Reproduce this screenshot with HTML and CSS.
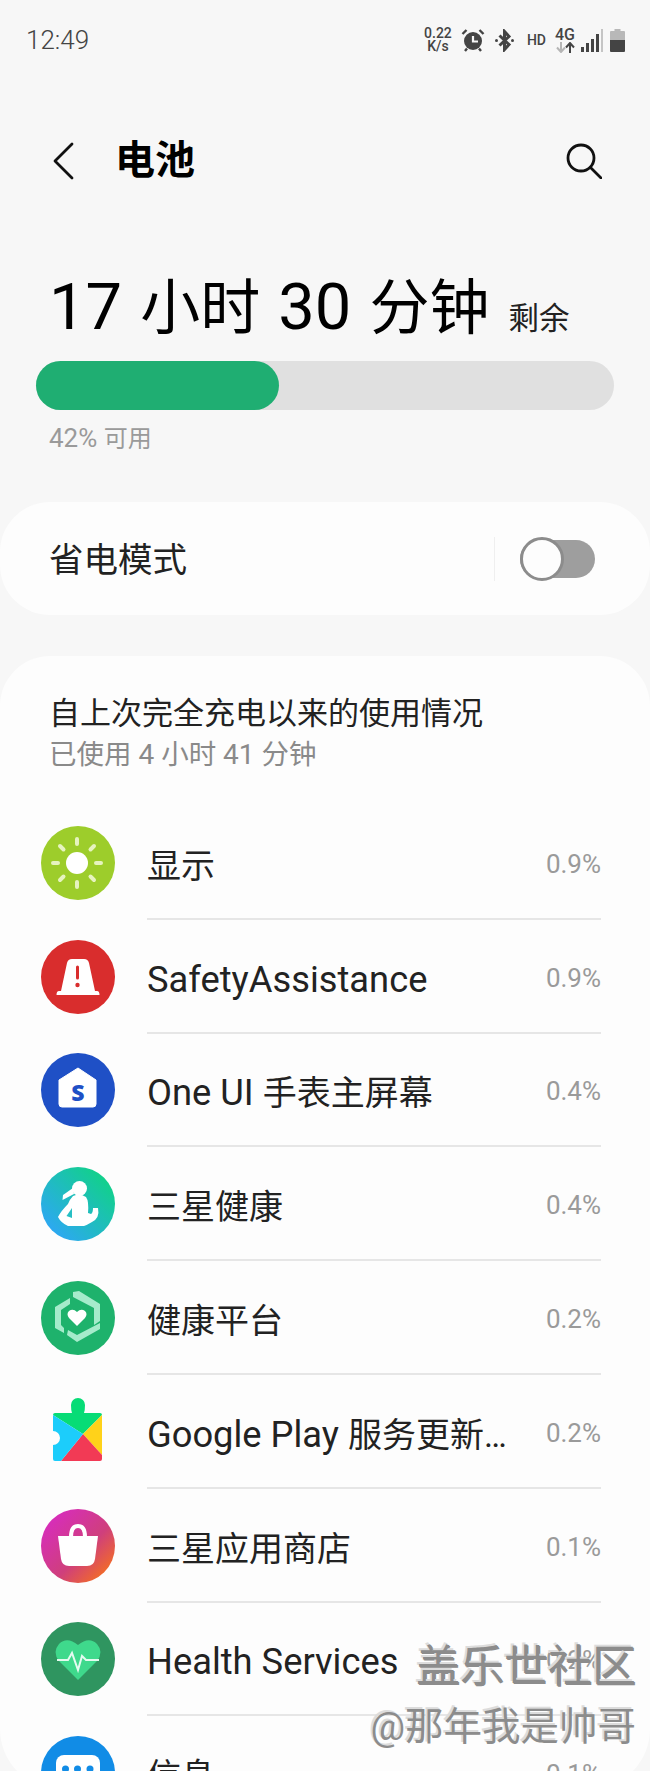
FILE: index.html
```html
<!DOCTYPE html>
<html lang="zh-CN">
<head>
  <meta charset="UTF-8">
  <meta name="viewport" content="width=device-width, initial-scale=1.0">
  <title>电池</title>
  <link rel="stylesheet" href="styles.css">
</head>
<body>
  <div class="status">
    <span class="time">12:49</span>
    <div class="status-icons">
      <div class="speed"><span>0.22</span><span>K/s</span></div>
      <svg class="ic-alarm" width="24" height="24" viewBox="0 0 24 24">
        <circle cx="12" cy="13" r="9" fill="#444"/>
        <path d="M12 8V13.500H17" stroke="#f7f7f7" stroke-width="2.200" fill="none"/>
        <path d="M1.500 6 5.500 2M22.500 6 18.500 2M6 20.500 4 23M18 20.500 20 23" stroke="#444" stroke-width="2.400" fill="none"/>
      </svg>
      <svg class="ic-bt" width="19" height="23" viewBox="0 0 19 23">
        <path d="M4.500 6.500 14 15.500 9.500 20.500V2.500L14 7.500 4.500 16.500" stroke="#444" stroke-width="3" fill="none"/>
        <circle cx="1.500" cy="11.500" r="1.500" fill="#444"/>
        <circle cx="17.500" cy="11.500" r="1.500" fill="#444"/>
      </svg>
      <span class="hd">HD</span>
      <div class="net">
        <span>4G</span>
        <svg width="19" height="11" viewBox="0 0 19 11">
          <path d="M5 0V9M1 5.500 5 10 9 5.500" stroke="#b5b5b5" stroke-width="2" fill="none"/>
          <path d="M14 11V2M10 5.500 14 1 18 5.500" stroke="#444" stroke-width="2" fill="none"/>
        </svg>
      </div>
      <svg class="ic-signal" width="23" height="23" viewBox="0 0 23 23">
        <rect x="0" y="18" width="3" height="5" fill="#444"/>
        <rect x="5" y="14" width="3" height="9" fill="#444"/>
        <rect x="10" y="10" width="3" height="13" fill="#444"/>
        <rect x="15" y="5" width="3" height="18" fill="#444"/>
        <rect x="20" y="0" width="2" height="23" fill="#c4c4c4"/>
      </svg>
      <svg class="ic-batt" width="15" height="23" viewBox="0 0 15 23">
        <path d="M4.500 0H10.500V2H14a1 1 0 0 1 1 1V11H0V3a1 1 0 0 1 1-1H4.500Z" fill="#b8b8b8"/>
        <path d="M0 11H15V22a1 1 0 0 1-1 1H1a1 1 0 0 1-1-1Z" fill="#444"/>
      </svg>
    </div>
  </div>

  <header class="topbar">
    <svg class="back" width="22" height="38" viewBox="0 0 22 38">
      <path d="M20 2 3 19 20 36" stroke="#111" stroke-width="2.800" fill="none" stroke-linecap="round" stroke-linejoin="round"/>
    </svg>
    <h1>电池</h1>
    <svg class="search" width="36" height="36" viewBox="0 0 36 36">
      <circle cx="15" cy="15" r="13" stroke="#111" stroke-width="2.800" fill="none"/>
      <path d="M24.500 24.500 35 35" stroke="#111" stroke-width="2.800" stroke-linecap="round"/>
    </svg>
  </header>

  <section class="summary">
    <div class="remain"><span class="big">17 <span class="zh">小时</span> 30 <span class="zh">分钟</span></span><span class="left">剩余</span></div>
    <div class="track"><div class="fill" style="width: 243px"></div></div>
    <div class="avail">42% <span class="zh">可用</span></div>
  </section>

  <section class="card saver">
    <span class="saver-label">省电模式</span>
    <div class="saver-end">
      <div class="switch"><div class="thumb"></div></div>
    </div>
  </section>

  <section class="card usage">
    <div class="usage-head">
      <div class="usage-title">自上次完全充电以来的使用情况</div>
      <div class="usage-sub"><span class="zh">已使用</span> 4 <span class="zh">小时</span> 41 <span class="zh">分钟</span></div>
    </div>

    <div class="row">
      <svg class="app" viewBox="0 0 74 74">
        <circle cx="37" cy="37" r="37" fill="#9dcd2b"/>
        <circle cx="36" cy="37" r="11" fill="#fff"/>
        <path d="M36 13V18M36 56V61M12 37H17M55 37H60M19 20 22.500 23.500M53 20 49.500 23.500M19 54 22.500 50.500M53 54 49.500 50.500" stroke="#e6f3bf" stroke-width="4" stroke-linecap="round"/>
      </svg>
      <div class="row-body"><span class="name"><span class="zh">显示</span></span><span class="pct">0.9%</span></div>
    </div>

    <div class="row">
      <svg class="app" viewBox="0 0 74 74">
        <circle cx="37" cy="37" r="37" fill="#d92d2d"/>
        <path d="M20 51 26 23Q27 19 31 19H43Q47 19 48 23L54 51H56Q58.500 51 58.500 55H15.500Q15.500 51 18 51Z" fill="#fff"/>
        <path d="M36.500 27V38" stroke="#d92d2d" stroke-width="3" stroke-linecap="round"/>
        <circle cx="36.500" cy="45" r="2.200" fill="#d92d2d"/>
      </svg>
      <div class="row-body"><span class="name">SafetyAssistance</span><span class="pct">0.9%</span></div>
    </div>

    <div class="row">
      <svg class="app" viewBox="0 0 74 74">
        <circle cx="37" cy="37" r="37" fill="#1f50c6"/>
        <path d="M37 15 55 27V51Q55 54 52 54H21Q18 54 18 51V27Z" fill="#fff" stroke="#fff" stroke-width="1" stroke-linejoin="round"/>
        <text x="37" y="48" class="app-s">S</text>
      </svg>
      <div class="row-body"><span class="name">One UI <span class="zh">手表主屏幕</span></span><span class="pct">0.4%</span></div>
    </div>

    <div class="row">
      <svg class="app" viewBox="0 0 74 74">
        <defs>
          <linearGradient id="shealth" x1="1" y1="0" x2="0" y2="1">
            <stop offset="0.15" stop-color="#12d08c"/>
            <stop offset="0.9" stop-color="#2ea6f7"/>
          </linearGradient>
        </defs>
        <circle cx="37" cy="37" r="37" fill="url(#shealth)"/>
        <circle cx="38.500" cy="21.500" r="7.500" fill="#fff"/>
        <path d="M32 21 22 28 21.500 33 33 27Z" fill="#fff"/>
        <path d="M32 29Q39 26 45 30 48 34 47 46L50 47Q52 46 52 41L57 41Q59 51 51 55 46 58 43 59H27Q20 56 17 50 20 44 27 37 29 32 32 29Z" fill="#fff"/>
        <path d="M31 41 25.500 49 31 51Z" fill="#26bfc4"/>
      </svg>
      <div class="row-body"><span class="name"><span class="zh">三星健康</span></span><span class="pct">0.4%</span></div>
    </div>

    <div class="row">
      <svg class="app" viewBox="0 0 74 74">
        <circle cx="37" cy="37" r="37" fill="#1eb26c"/>
        <path d="M32 11 38 10 59 23V40L53 44V27L32 16Z" fill="#a5ebcb"/>
        <path d="M29 17 14 26V47L23 52V47L20 44V29L29 23Z" fill="#a5ebcb"/>
        <path d="M26 54 36 61 59 48V42L36 54 27 49Z" fill="#a5ebcb"/>
        <path d="M36 45 28 37Q25 33 28 30 32 27 36 31 40 27 44 30 47 33 44 37Z" fill="#fff"/>
      </svg>
      <div class="row-body"><span class="name"><span class="zh">健康平台</span></span><span class="pct">0.2%</span></div>
    </div>

    <div class="row">
      <svg class="app" viewBox="0 0 74 74">
        <path d="M12 20Q12 18 14 18H31Q30 15 30 10A7 7 0 1 1 44 10Q44 15 43 18H59Q61 18 61 20L42 39Z" fill="#07dc76"/>
        <path d="M61 20V60L42 39Z" fill="#ffd21a"/>
        <path d="M20 66 42 39 61 60V64Q61 66 59 66Z" fill="#f23a55"/>
        <path d="M12 20 42 39 20 66H14Q12 66 12 64V50A7 7 0 0 0 12 36Z" fill="#1ccdfb"/>
      </svg>
      <div class="row-body"><span class="name">Google Play <span class="zh">服务更新…</span></span><span class="pct">0.2%</span></div>
    </div>

    <div class="row">
      <svg class="app" viewBox="0 0 74 74">
        <defs>
          <linearGradient id="store" x1="0.1" y1="0.15" x2="0.85" y2="0.9">
            <stop offset="0" stop-color="#d72dbb"/>
            <stop offset="0.6" stop-color="#cf3f7c"/>
            <stop offset="1" stop-color="#f26b28"/>
          </linearGradient>
        </defs>
        <circle cx="37" cy="37" r="37" fill="url(#store)"/>
        <path d="M17 27H57L54 50Q53 57 46 57H28Q21 57 20 50Z" fill="#fff"/>
        <path d="M30 28Q30 17 37 17 44 17 44 28" stroke="#fff" stroke-width="4" fill="none"/>
      </svg>
      <div class="row-body"><span class="name"><span class="zh">三星应用商店</span></span><span class="pct">0.1%</span></div>
    </div>

    <div class="row">
      <svg class="app" viewBox="0 0 74 74">
        <circle cx="37" cy="37" r="37" fill="#2f9560"/>
        <path d="M37 58 18 39Q11 30 18 22 26 14 37 23 48 14 56 22 63 30 56 39Z" fill="#3fd98c"/>
        <path d="M16 38H27L31 31 37 48 41 34 45 38H58" stroke="#e5fbf0" stroke-width="2" fill="none"/>
      </svg>
      <div class="row-body"><span class="name">Health Services</span><span class="pct">0.2%</span></div>
    </div>

    <div class="row">
      <svg class="app" viewBox="0 0 74 74">
        <circle cx="37" cy="37" r="37" fill="#118ce6"/>
        <rect x="15" y="19" width="44" height="36" rx="8" fill="#fff"/>
        <circle cx="24.500" cy="33" r="3.500" fill="#118ce6"/>
        <circle cx="36.500" cy="33" r="3.500" fill="#118ce6"/>
        <circle cx="49" cy="33" r="3.500" fill="#118ce6"/>
      </svg>
      <div class="row-body"><span class="name"><span class="zh">信息</span></span><span class="pct">0.1%</span></div>
    </div>
  </section>

  <div class="mark">
    <div class="mark-a">盖乐世社区</div>
    <div class="mark-b">@那年我是帅哥</div>
  </div>
</body>
</html>
```

FILE: styles.css
```css
* {
  margin: 0;
  padding: 0;
  box-sizing: border-box;
}
html, body {
  height: 1771px;
  overflow: hidden;
}
body {
  position: relative;
  background-color: #f7f7f7;
  color: #111;
  font-family: Roboto, "Noto Sans CJK SC", sans-serif;
}
.status {
  display: flex;
  justify-content: space-between;
  align-items: center;
  height: 80px;
  padding: 0 25px 0 26px;
  color: #444;
}
.time {
  font-size: 26px;
  font-weight: 300;
}
.status-icons {
  display: flex;
  align-items: center;
}
.speed {
  display: flex;
  flex-direction: column;
  align-items: center;
  width: 30px;
  font-size: 14px;
  font-weight: 500;
  line-height: 13px;
}
.ic-alarm {
  margin-left: 8px;
}
.ic-bt {
  margin-left: 10px;
}
.hd {
  margin-left: 13px;
  font-size: 14px;
  font-weight: 500;
}
.net {
  display: flex;
  flex-direction: column;
  align-items: center;
  margin-left: 9px;
  font-size: 16px;
  font-weight: 500;
  line-height: 14px;
}
.net svg {
  display: block;
}
.ic-signal {
  margin-left: 6px;
}
.ic-batt {
  margin-left: 6px;
}
.topbar {
  display: flex;
  align-items: center;
  height: 72px;
  margin-top: 45px;
  padding: 0 48px 0 52px;
}
.topbar h1 {
  flex: 1;
  margin-left: 41px;
  font-size: 40px;
  line-height: 68px;
  font-weight: 700;
  color: #000;
}
.summary {
  padding: 0 36px;
  margin-top: 70px;
}
.remain {
  display: flex;
  align-items: baseline;
  padding-left: 13px;
  height: 80px;
}
.big {
  font-size: 65px;
  line-height: 80px;
  word-spacing: 2px;
  color: #000;
}
.big .zh {
  font-size: 60px;
}
.left {
  margin-left: 19px;
  font-size: 30.5px;
  color: #222;
}
.track {
  height: 49px;
  margin-top: 14px;
  border-radius: 25px;
  background-color: #e0e0e0;
}
.fill {
  height: 100%;
  border-radius: 25px;
  background-color: #1fae72;
}
.avail {
  margin-top: 11px;
  padding-left: 13px;
  font-size: 26px;
  line-height: 34px;
  color: #9a9a9a;
}
.avail .zh {
  font-size: 24px;
}
.card {
  background-color: #fdfdfd;
  border-radius: 50px;
}
.saver {
  display: flex;
  justify-content: space-between;
  align-items: center;
  height: 113px;
  margin-top: 46px;
  padding: 0 55px 0 49px;
}
.saver-label {
  margin-bottom: 4px;
  font-size: 34.5px;
  color: #222;
}
.saver-end {
  display: flex;
  align-items: center;
  height: 44px;
  padding-left: 25px;
  border-left: 1px solid #efefef;
}
.switch {
  position: relative;
  width: 75px;
  height: 38px;
  border-radius: 19px;
  background-color: #9e9e9e;
}
.thumb {
  position: absolute;
  top: -3px;
  left: 0;
  width: 44px;
  height: 44px;
  border: 3px solid #8c8c8c;
  border-radius: 50%;
  background-color: #fdfdfd;
}
.usage {
  height: 1133px;
  margin-top: 41px;
  border-radius: 50px 50px 60px 60px;
}
.usage-head {
  height: 150px;
  padding: 38px 0 0 49px;
}
.usage-title {
  font-size: 31px;
  line-height: 40px;
  color: #222;
}
.usage-sub {
  margin-top: 1px;
  font-size: 28px;
  line-height: 40px;
  color: #8a8a8a;
}
.usage-sub .zh {
  font-size: 27.5px;
}
.row {
  display: flex;
  align-items: center;
  gap: 32px;
  height: 113.8px;
  padding: 0 49px 0 41px;
}
.app {
  flex: none;
  width: 74px;
  height: 74px;
}
.app-s {
  font-size: 23px;
  font-weight: 800;
  font-family: "Open Sans", sans-serif;
  text-anchor: middle;
  fill: #1f50c6;
}
.row-body {
  display: flex;
  flex: 1;
  align-items: center;
  min-width: 0;
  height: 100%;
  border-bottom: 2px solid #e6e6e6;
}
.name {
  flex: 1;
  min-width: 0;
  padding-top: 8px;
  white-space: nowrap;
  font-size: 36.3px;
  line-height: 46px;
  color: #222;
}
.name .zh {
  font-size: 34px;
}
.pct {
  flex: none;
  width: 58px;
  margin-left: 30px;
  padding-top: 4px;
  font-size: 26px;
  text-align: right;
  color: #9a9a9a;
}
.mark {
  position: absolute;
  right: 14px;
  top: 1636px;
  text-align: right;
  color: #8c8c8c;
  text-shadow: -2px -2px 0 #dcdcdc;
}
.mark-a {
  font-size: 44px;
  line-height: 62px;
  text-shadow: -2px -2px 0 #dcdcdc, 1px 1px 0 #8c8c8c;
}
.mark-b {
  font-size: 38.5px;
  line-height: 57px;
}
```
